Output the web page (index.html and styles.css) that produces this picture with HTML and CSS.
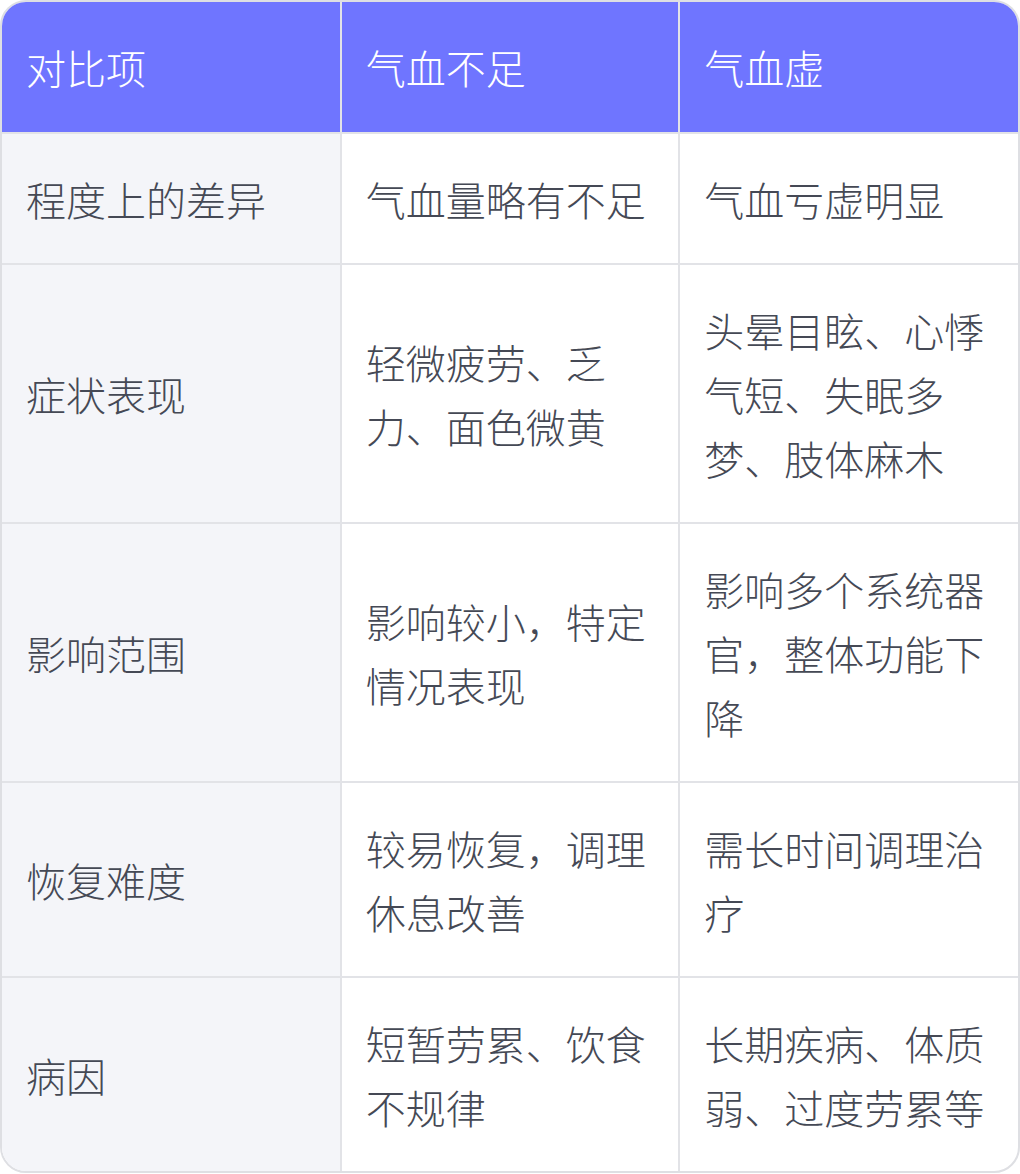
FILE: index.html
```html
<!DOCTYPE html>
<html lang="zh-CN">
<head>
<meta charset="utf-8">
<link rel="stylesheet" href="styles.css">
</head>
<body>
<div class="table-wrap">
  <table class="compare">
    <thead>
      <tr>
        <th>对比项</th>
        <th>气血不足</th>
        <th>气血虚</th>
      </tr>
    </thead>
    <tbody>
      <tr>
        <td class="label">程度上的差异</td>
        <td>气血量略有不足</td>
        <td>气血亏虚明显</td>
      </tr>
      <tr>
        <td class="label">症状表现</td>
        <td>轻微疲劳、乏力、面色微黄</td>
        <td>头晕目眩、心悸气短、失眠多梦、肢体麻木</td>
      </tr>
      <tr>
        <td class="label">影响范围</td>
        <td>影响较小，特定情况表现</td>
        <td>影响多个系统器官，整体功能下降</td>
      </tr>
      <tr>
        <td class="label">恢复难度</td>
        <td>较易恢复，调理休息改善</td>
        <td>需长时间调理治疗</td>
      </tr>
      <tr>
        <td class="label">病因</td>
        <td>短暂劳累、饮食不规律</td>
        <td>长期疾病、体质弱、过度劳累等</td>
      </tr>
    </tbody>
  </table>
</div>
</body>
</html>
```

FILE: styles.css
```css
html, body {
  margin: 0;
  padding: 0;
  background: #ffffff;
}

body {
  font-family: "Noto Sans CJK SC", "Noto Sans", sans-serif;
  font-size: 40px;
  line-height: 64px;
  color: #454955;
}

.table-wrap {
  width: 1020px;
  box-sizing: border-box;
  border: 2px solid #dedfe3;
  border-radius: 26px;
  overflow: hidden;
}

.compare {
  width: 100%;
  border-collapse: collapse;
  table-layout: fixed;
}

.compare th,
.compare td {
  padding: 32.5px 24px;
  text-align: left;
  vertical-align: middle;
  border: 2px solid #e2e3e7;
  font-weight: 300;
}

.compare tr:first-child th { border-top: none; }
.compare tr:last-child td { border-bottom: none; }
.compare th:first-child,
.compare td:first-child { border-left: none; }
.compare th:last-child,
.compare td:last-child { border-right: none; }

.compare th {
  padding-top: 33px;
  padding-bottom: 33px;
  background: #6f75ff;
  color: #ffffff;
  border-top: none;
  border-color: #e2e3e7;
}

.compare td.label {
  background: #f4f5f9;
}
```
